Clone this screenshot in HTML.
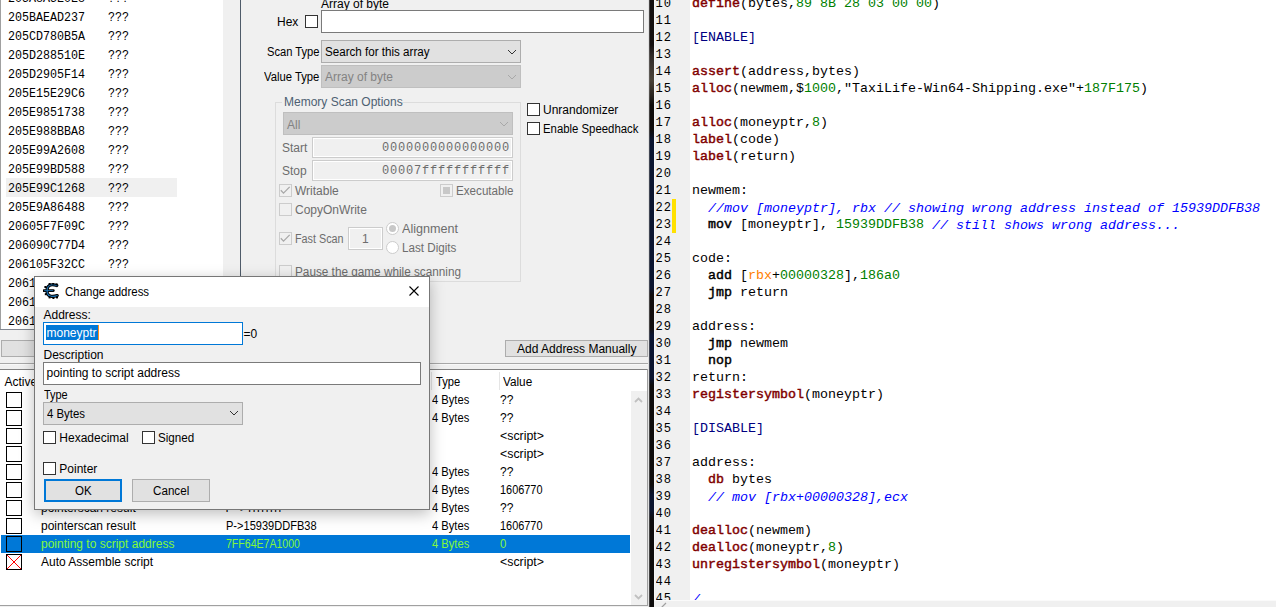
<!DOCTYPE html><html><head><meta charset="utf-8"><style>
html,body{margin:0;padding:0;}
body{width:1276px;height:607px;overflow:hidden;position:relative;background:#f0f0f0;font-family:"Liberation Sans",sans-serif;}
div{box-sizing:content-box;}
</style></head><body>
<div style="position:absolute;left:0px;top:0px;width:223px;height:329px;background:#fff"></div>
<div style="position:absolute;left:0px;top:0px;width:1px;height:330px;background:#a0a0a0"></div>
<div style="position:absolute;left:0px;top:329px;width:223px;height:1px;background:#828790"></div>
<div style="position:absolute;left:6px;top:178px;width:171px;height:19px;background:#f0f0f0"></div>
<div style="position:absolute;left:8px;top:-7.70px;line-height:15px;font-size:12px;font-family:'Liberation Mono', monospace;color:#000;white-space:pre;transform:scaleX(0.972);transform-origin:0 0;">205A8A5E0E8</div>
<div style="position:absolute;left:107.5px;top:-7.70px;line-height:15px;font-size:12px;font-family:'Liberation Mono', monospace;color:#000;white-space:pre;transform:scaleX(0.972);transform-origin:0 0;">???</div>
<div style="position:absolute;left:8px;top:11.30px;line-height:15px;font-size:12px;font-family:'Liberation Mono', monospace;color:#000;white-space:pre;transform:scaleX(0.972);transform-origin:0 0;">205BAEAD237</div>
<div style="position:absolute;left:107.5px;top:11.30px;line-height:15px;font-size:12px;font-family:'Liberation Mono', monospace;color:#000;white-space:pre;transform:scaleX(0.972);transform-origin:0 0;">???</div>
<div style="position:absolute;left:8px;top:30.30px;line-height:15px;font-size:12px;font-family:'Liberation Mono', monospace;color:#000;white-space:pre;transform:scaleX(0.972);transform-origin:0 0;">205CD780B5A</div>
<div style="position:absolute;left:107.5px;top:30.30px;line-height:15px;font-size:12px;font-family:'Liberation Mono', monospace;color:#000;white-space:pre;transform:scaleX(0.972);transform-origin:0 0;">???</div>
<div style="position:absolute;left:8px;top:49.30px;line-height:15px;font-size:12px;font-family:'Liberation Mono', monospace;color:#000;white-space:pre;transform:scaleX(0.972);transform-origin:0 0;">205D288510E</div>
<div style="position:absolute;left:107.5px;top:49.30px;line-height:15px;font-size:12px;font-family:'Liberation Mono', monospace;color:#000;white-space:pre;transform:scaleX(0.972);transform-origin:0 0;">???</div>
<div style="position:absolute;left:8px;top:68.31px;line-height:15px;font-size:12px;font-family:'Liberation Mono', monospace;color:#000;white-space:pre;transform:scaleX(0.972);transform-origin:0 0;">205D2905F14</div>
<div style="position:absolute;left:107.5px;top:68.31px;line-height:15px;font-size:12px;font-family:'Liberation Mono', monospace;color:#000;white-space:pre;transform:scaleX(0.972);transform-origin:0 0;">???</div>
<div style="position:absolute;left:8px;top:87.31px;line-height:15px;font-size:12px;font-family:'Liberation Mono', monospace;color:#000;white-space:pre;transform:scaleX(0.972);transform-origin:0 0;">205E15E29C6</div>
<div style="position:absolute;left:107.5px;top:87.31px;line-height:15px;font-size:12px;font-family:'Liberation Mono', monospace;color:#000;white-space:pre;transform:scaleX(0.972);transform-origin:0 0;">???</div>
<div style="position:absolute;left:8px;top:106.31px;line-height:15px;font-size:12px;font-family:'Liberation Mono', monospace;color:#000;white-space:pre;transform:scaleX(0.972);transform-origin:0 0;">205E9851738</div>
<div style="position:absolute;left:107.5px;top:106.31px;line-height:15px;font-size:12px;font-family:'Liberation Mono', monospace;color:#000;white-space:pre;transform:scaleX(0.972);transform-origin:0 0;">???</div>
<div style="position:absolute;left:8px;top:125.31px;line-height:15px;font-size:12px;font-family:'Liberation Mono', monospace;color:#000;white-space:pre;transform:scaleX(0.972);transform-origin:0 0;">205E988BBA8</div>
<div style="position:absolute;left:107.5px;top:125.31px;line-height:15px;font-size:12px;font-family:'Liberation Mono', monospace;color:#000;white-space:pre;transform:scaleX(0.972);transform-origin:0 0;">???</div>
<div style="position:absolute;left:8px;top:144.31px;line-height:15px;font-size:12px;font-family:'Liberation Mono', monospace;color:#000;white-space:pre;transform:scaleX(0.972);transform-origin:0 0;">205E99A2608</div>
<div style="position:absolute;left:107.5px;top:144.31px;line-height:15px;font-size:12px;font-family:'Liberation Mono', monospace;color:#000;white-space:pre;transform:scaleX(0.972);transform-origin:0 0;">???</div>
<div style="position:absolute;left:8px;top:163.31px;line-height:15px;font-size:12px;font-family:'Liberation Mono', monospace;color:#000;white-space:pre;transform:scaleX(0.972);transform-origin:0 0;">205E99BD588</div>
<div style="position:absolute;left:107.5px;top:163.31px;line-height:15px;font-size:12px;font-family:'Liberation Mono', monospace;color:#000;white-space:pre;transform:scaleX(0.972);transform-origin:0 0;">???</div>
<div style="position:absolute;left:8px;top:182.31px;line-height:15px;font-size:12px;font-family:'Liberation Mono', monospace;color:#000;white-space:pre;transform:scaleX(0.972);transform-origin:0 0;">205E99C1268</div>
<div style="position:absolute;left:107.5px;top:182.31px;line-height:15px;font-size:12px;font-family:'Liberation Mono', monospace;color:#000;white-space:pre;transform:scaleX(0.972);transform-origin:0 0;">???</div>
<div style="position:absolute;left:8px;top:201.31px;line-height:15px;font-size:12px;font-family:'Liberation Mono', monospace;color:#000;white-space:pre;transform:scaleX(0.972);transform-origin:0 0;">205E9A86488</div>
<div style="position:absolute;left:107.5px;top:201.31px;line-height:15px;font-size:12px;font-family:'Liberation Mono', monospace;color:#000;white-space:pre;transform:scaleX(0.972);transform-origin:0 0;">???</div>
<div style="position:absolute;left:8px;top:220.31px;line-height:15px;font-size:12px;font-family:'Liberation Mono', monospace;color:#000;white-space:pre;transform:scaleX(0.972);transform-origin:0 0;">20605F7F09C</div>
<div style="position:absolute;left:107.5px;top:220.31px;line-height:15px;font-size:12px;font-family:'Liberation Mono', monospace;color:#000;white-space:pre;transform:scaleX(0.972);transform-origin:0 0;">???</div>
<div style="position:absolute;left:8px;top:239.31px;line-height:15px;font-size:12px;font-family:'Liberation Mono', monospace;color:#000;white-space:pre;transform:scaleX(0.972);transform-origin:0 0;">206090C77D4</div>
<div style="position:absolute;left:107.5px;top:239.31px;line-height:15px;font-size:12px;font-family:'Liberation Mono', monospace;color:#000;white-space:pre;transform:scaleX(0.972);transform-origin:0 0;">???</div>
<div style="position:absolute;left:8px;top:258.31px;line-height:15px;font-size:12px;font-family:'Liberation Mono', monospace;color:#000;white-space:pre;transform:scaleX(0.972);transform-origin:0 0;">206105F32CC</div>
<div style="position:absolute;left:107.5px;top:258.31px;line-height:15px;font-size:12px;font-family:'Liberation Mono', monospace;color:#000;white-space:pre;transform:scaleX(0.972);transform-origin:0 0;">???</div>
<div style="position:absolute;left:8px;top:277.31px;line-height:15px;font-size:12px;font-family:'Liberation Mono', monospace;color:#000;white-space:pre;transform:scaleX(0.972);transform-origin:0 0;">206105F4A10</div>
<div style="position:absolute;left:107.5px;top:277.31px;line-height:15px;font-size:12px;font-family:'Liberation Mono', monospace;color:#000;white-space:pre;transform:scaleX(0.972);transform-origin:0 0;">???</div>
<div style="position:absolute;left:8px;top:296.31px;line-height:15px;font-size:12px;font-family:'Liberation Mono', monospace;color:#000;white-space:pre;transform:scaleX(0.972);transform-origin:0 0;">206107A0F00</div>
<div style="position:absolute;left:107.5px;top:296.31px;line-height:15px;font-size:12px;font-family:'Liberation Mono', monospace;color:#000;white-space:pre;transform:scaleX(0.972);transform-origin:0 0;">???</div>
<div style="position:absolute;left:8px;top:315.31px;line-height:15px;font-size:12px;font-family:'Liberation Mono', monospace;color:#000;white-space:pre;transform:scaleX(0.972);transform-origin:0 0;">20610A3D1C8</div>
<div style="position:absolute;left:107.5px;top:315.31px;line-height:15px;font-size:12px;font-family:'Liberation Mono', monospace;color:#000;white-space:pre;transform:scaleX(0.972);transform-origin:0 0;">???</div>
<div style="position:absolute;left:240px;top:0px;width:1px;height:330px;background:#4f5b69"></div>
<div style="position:absolute;left:321px;top:-3.16px;line-height:14px;font-size:12px;font-family:'Liberation Sans', sans-serif;color:#000;white-space:pre;">Array of byte</div>
<div style="position:absolute;left:277px;top:14.84px;line-height:14px;font-size:12px;font-family:'Liberation Sans', sans-serif;color:#000;white-space:pre;">Hex</div>
<div style="position:absolute;left:305px;top:15px;width:11px;height:11px;border:1px solid #333;background:#fff"></div>
<div style="position:absolute;left:321px;top:10px;width:321px;height:21px;background:#fff;border:1px solid #7a7a7a"></div>
<div style="position:absolute;left:267px;top:44.84px;line-height:14px;font-size:12px;font-family:'Liberation Sans', sans-serif;color:#000;white-space:pre;transform:scaleX(0.93);transform-origin:0 0;">Scan Type</div>
<div style="position:absolute;left:321px;top:40px;width:198px;height:21px;background:#e1e1e1;border:1px solid #adadad"></div>
<div style="position:absolute;left:325px;top:44.84px;line-height:14px;font-size:12px;font-family:'Liberation Sans', sans-serif;color:#000;white-space:pre;transform:scaleX(0.968);transform-origin:0 0;">Search for this array</div>
<svg style="position:absolute;left:507.0px;top:49.0px" width="10" height="6.0"><path d="M1 1 L5.0 5.0 L9 1" fill="none" stroke="#333" stroke-width="1"/></svg>
<div style="position:absolute;left:264px;top:69.84px;line-height:14px;font-size:12px;font-family:'Liberation Sans', sans-serif;color:#000;white-space:pre;transform:scaleX(0.94);transform-origin:0 0;">Value Type</div>
<div style="position:absolute;left:321px;top:65px;width:198px;height:21px;background:#cccccc;border:1px solid #bfbfbf"></div>
<div style="position:absolute;left:325px;top:69.84px;line-height:14px;font-size:12px;font-family:'Liberation Sans', sans-serif;color:#838383;white-space:pre;">Array of byte</div>
<svg style="position:absolute;left:507.0px;top:74.0px" width="10" height="6.0"><path d="M1 1 L5.0 5.0 L9 1" fill="none" stroke="#a8a8a8" stroke-width="1"/></svg>
<div style="position:absolute;left:275px;top:102px;width:244px;height:178px;border:1px solid #dcdcdc"></div>
<div style="position:absolute;left:282px;top:95px;width:120px;height:12px;background:#f0f0f0"></div>
<div style="position:absolute;left:284px;top:94.84px;line-height:14px;font-size:12px;font-family:'Liberation Sans', sans-serif;color:#4d6072;white-space:pre;">Memory Scan Options</div>
<div style="position:absolute;left:283px;top:112px;width:228px;height:21px;background:#cccccc;border:1px solid #bfbfbf"></div>
<div style="position:absolute;left:287px;top:117.84px;line-height:14px;font-size:12px;font-family:'Liberation Sans', sans-serif;color:#838383;white-space:pre;">All</div>
<svg style="position:absolute;left:499.0px;top:121.0px" width="10" height="6.0"><path d="M1 1 L5.0 5.0 L9 1" fill="none" stroke="#a8a8a8" stroke-width="1"/></svg>
<div style="position:absolute;left:282px;top:140.84px;line-height:14px;font-size:12px;font-family:'Liberation Sans', sans-serif;color:#6d6d6d;white-space:pre;">Start</div>
<div style="position:absolute;left:312px;top:137px;width:199px;height:19px;background:#f0f0f0;border:1px solid #cccccc;box-shadow:inset 0 0 0 1px #fff"></div>
<div style="position:absolute;left:382px;top:141.31px;line-height:15px;font-size:12px;font-family:'Liberation Mono', monospace;color:#6d6d6d;white-space:pre;letter-spacing:0.8px">0000000000000000</div>
<div style="position:absolute;left:282px;top:163.84px;line-height:14px;font-size:12px;font-family:'Liberation Sans', sans-serif;color:#6d6d6d;white-space:pre;">Stop</div>
<div style="position:absolute;left:312px;top:160px;width:199px;height:19px;background:#f0f0f0;border:1px solid #cccccc;box-shadow:inset 0 0 0 1px #fff"></div>
<div style="position:absolute;left:382px;top:164.31px;line-height:15px;font-size:12px;font-family:'Liberation Mono', monospace;color:#6d6d6d;white-space:pre;letter-spacing:0.8px">00007fffffffffff</div>
<div style="position:absolute;left:279px;top:184px;width:11px;height:11px;border:1px solid #cccccc;background:#f0f0f0"></div>
<svg style="position:absolute;left:279px;top:184px" width="13" height="13"><path d="M1.8 6.3 L4.5 9.1 L10.7 2.9" fill="none" stroke="#a8a8a8" stroke-width="1.3"/></svg>
<div style="position:absolute;left:295px;top:183.84px;line-height:14px;font-size:12px;font-family:'Liberation Sans', sans-serif;color:#6d6d6d;white-space:pre;">Writable</div>
<div style="position:absolute;left:440px;top:184px;width:11px;height:11px;border:1px solid #cccccc;background:#f0f0f0"></div>
<div style="position:absolute;left:443px;top:187px;width:7px;height:7px;background:#c8c8c8"></div>
<div style="position:absolute;left:456px;top:183.84px;line-height:14px;font-size:12px;font-family:'Liberation Sans', sans-serif;color:#6d6d6d;white-space:pre;transform:scaleX(0.97);transform-origin:0 0;">Executable</div>
<div style="position:absolute;left:279px;top:203px;width:11px;height:11px;border:1px solid #cccccc;background:#f0f0f0"></div>
<div style="position:absolute;left:295px;top:202.84px;line-height:14px;font-size:12px;font-family:'Liberation Sans', sans-serif;color:#6d6d6d;white-space:pre;">CopyOnWrite</div>
<div style="position:absolute;left:279px;top:232px;width:11px;height:11px;border:1px solid #cccccc;background:#f0f0f0"></div>
<svg style="position:absolute;left:279px;top:232px" width="13" height="13"><path d="M1.8 6.3 L4.5 9.1 L10.7 2.9" fill="none" stroke="#a8a8a8" stroke-width="1.3"/></svg>
<div style="position:absolute;left:295px;top:231.84px;line-height:14px;font-size:12px;font-family:'Liberation Sans', sans-serif;color:#6d6d6d;white-space:pre;transform:scaleX(0.9);transform-origin:0 0;">Fast Scan</div>
<div style="position:absolute;left:348px;top:227px;width:33px;height:21px;background:#f0f0f0;border:1px solid #cccccc;box-shadow:inset 0 0 0 1px #fff"></div>
<div style="position:absolute;left:362px;top:231.84px;line-height:14px;font-size:12px;font-family:'Liberation Sans', sans-serif;color:#6d6d6d;white-space:pre;">1</div>
<div style="position:absolute;left:386px;top:222px;width:11px;height:11px;border:1px solid #cccccc;border-radius:50%;background:#fff"></div>
<div style="position:absolute;left:389px;top:225px;width:7px;height:7px;border-radius:50%;background:#c8c8c8"></div>
<div style="position:absolute;left:402px;top:221.84px;line-height:14px;font-size:12px;font-family:'Liberation Sans', sans-serif;color:#6d6d6d;white-space:pre;transform:scaleX(1.05);transform-origin:0 0;">Alignment</div>
<div style="position:absolute;left:386px;top:241px;width:11px;height:11px;border:1px solid #cccccc;border-radius:50%;background:#fff"></div>
<div style="position:absolute;left:402px;top:240.84px;line-height:14px;font-size:12px;font-family:'Liberation Sans', sans-serif;color:#6d6d6d;white-space:pre;transform:scaleX(0.97);transform-origin:0 0;">Last Digits</div>
<div style="position:absolute;left:279px;top:265px;width:11px;height:11px;border:1px solid #cccccc;background:#f0f0f0"></div>
<div style="position:absolute;left:295px;top:264.84px;line-height:14px;font-size:12px;font-family:'Liberation Sans', sans-serif;color:#6d6d6d;white-space:pre;transform:scaleX(0.98);transform-origin:0 0;">Pause the game while scanning</div>
<div style="position:absolute;left:527px;top:103px;width:11px;height:11px;border:1px solid #333;background:#fff"></div>
<div style="position:absolute;left:543px;top:103.34px;line-height:14px;font-size:12px;font-family:'Liberation Sans', sans-serif;color:#000;white-space:pre;">Unrandomizer</div>
<div style="position:absolute;left:527px;top:122px;width:11px;height:11px;border:1px solid #333;background:#fff"></div>
<div style="position:absolute;left:543px;top:122.34px;line-height:14px;font-size:12px;font-family:'Liberation Sans', sans-serif;color:#000;white-space:pre;transform:scaleX(0.947);transform-origin:0 0;">Enable Speedhack</div>
<div style="position:absolute;left:505px;top:340px;width:141px;height:15px;background:#e1e1e1;border:1px solid #adadad"></div>
<div style="position:absolute;left:517px;top:342.14px;line-height:14px;font-size:12px;font-family:'Liberation Sans', sans-serif;color:#000;white-space:pre;">Add Address Manually</div>
<div style="position:absolute;left:1px;top:340px;width:200px;height:15px;background:#e1e1e1;border:1px solid #adadad"></div>
<div style="position:absolute;left:0px;top:363px;width:648px;height:1px;background:#a8a8a8"></div>
<div style="position:absolute;left:0px;top:364px;width:648px;height:1px;background:#f8f8f8"></div>
<div style="position:absolute;left:0px;top:369px;width:648px;height:237px;background:#fff"></div>
<div style="position:absolute;left:0px;top:369px;width:648px;height:1px;background:#828282"></div>
<div style="position:absolute;left:647px;top:369px;width:1px;height:237px;background:#a0a0a0"></div>
<div style="position:absolute;left:0px;top:605px;width:648px;height:1px;background:#a0a0a0"></div>
<div style="position:absolute;left:4.5px;top:374.64px;line-height:14px;font-size:12px;font-family:'Liberation Sans', sans-serif;color:#000;white-space:pre;">Active</div>
<div style="position:absolute;left:431px;top:372px;width:1px;height:18px;background:#e5e5e5"></div>
<div style="position:absolute;left:436px;top:374.64px;line-height:14px;font-size:12px;font-family:'Liberation Sans', sans-serif;color:#000;white-space:pre;transform:scaleX(0.93);transform-origin:0 0;">Type</div>
<div style="position:absolute;left:499px;top:372px;width:1px;height:18px;background:#e5e5e5"></div>
<div style="position:absolute;left:503px;top:374.64px;line-height:14px;font-size:12px;font-family:'Liberation Sans', sans-serif;color:#000;white-space:pre;transform:scaleX(0.98);transform-origin:0 0;">Value</div>
<div style="position:absolute;left:6px;top:392px;width:14px;height:14px;border:1px solid #000;background:#fff"></div>
<div style="position:absolute;left:432px;top:392.74px;line-height:14px;font-size:12px;font-family:'Liberation Sans', sans-serif;color:#000;white-space:pre;transform:scaleX(0.93);transform-origin:0 0;">4 Bytes</div>
<div style="position:absolute;left:500px;top:392.74px;line-height:14px;font-size:12px;font-family:'Liberation Sans', sans-serif;color:#000;white-space:pre;">??</div>
<div style="position:absolute;left:6px;top:410px;width:14px;height:14px;border:1px solid #000;background:#fff"></div>
<div style="position:absolute;left:432px;top:410.74px;line-height:14px;font-size:12px;font-family:'Liberation Sans', sans-serif;color:#000;white-space:pre;transform:scaleX(0.93);transform-origin:0 0;">4 Bytes</div>
<div style="position:absolute;left:500px;top:410.74px;line-height:14px;font-size:12px;font-family:'Liberation Sans', sans-serif;color:#000;white-space:pre;">??</div>
<div style="position:absolute;left:6px;top:428px;width:14px;height:14px;border:1px solid #000;background:#fff"></div>
<div style="position:absolute;left:500px;top:428.74px;line-height:14px;font-size:12px;font-family:'Liberation Sans', sans-serif;color:#000;white-space:pre;transform:scaleX(1.03);transform-origin:0 0;">&lt;script&gt;</div>
<div style="position:absolute;left:6px;top:446px;width:14px;height:14px;border:1px solid #000;background:#fff"></div>
<div style="position:absolute;left:500px;top:446.74px;line-height:14px;font-size:12px;font-family:'Liberation Sans', sans-serif;color:#000;white-space:pre;transform:scaleX(1.03);transform-origin:0 0;">&lt;script&gt;</div>
<div style="position:absolute;left:6px;top:464px;width:14px;height:14px;border:1px solid #000;background:#fff"></div>
<div style="position:absolute;left:432px;top:464.74px;line-height:14px;font-size:12px;font-family:'Liberation Sans', sans-serif;color:#000;white-space:pre;transform:scaleX(0.93);transform-origin:0 0;">4 Bytes</div>
<div style="position:absolute;left:500px;top:464.74px;line-height:14px;font-size:12px;font-family:'Liberation Sans', sans-serif;color:#000;white-space:pre;">??</div>
<div style="position:absolute;left:6px;top:482px;width:14px;height:14px;border:1px solid #000;background:#fff"></div>
<div style="position:absolute;left:432px;top:482.74px;line-height:14px;font-size:12px;font-family:'Liberation Sans', sans-serif;color:#000;white-space:pre;transform:scaleX(0.93);transform-origin:0 0;">4 Bytes</div>
<div style="position:absolute;left:500px;top:482.74px;line-height:14px;font-size:12px;font-family:'Liberation Sans', sans-serif;color:#000;white-space:pre;transform:scaleX(0.91);transform-origin:0 0;">1606770</div>
<div style="position:absolute;left:6px;top:500px;width:14px;height:14px;border:1px solid #000;background:#fff"></div>
<div style="position:absolute;left:41px;top:500.74px;line-height:14px;font-size:12px;font-family:'Liberation Sans', sans-serif;color:#000;white-space:pre;">pointerscan result</div>
<div style="position:absolute;left:225.5px;top:500.74px;line-height:14px;font-size:12px;font-family:'Liberation Sans', sans-serif;color:#000;white-space:pre;letter-spacing:1.2px">P-&gt;ffffffff</div>
<div style="position:absolute;left:432px;top:500.74px;line-height:14px;font-size:12px;font-family:'Liberation Sans', sans-serif;color:#000;white-space:pre;transform:scaleX(0.93);transform-origin:0 0;">4 Bytes</div>
<div style="position:absolute;left:500px;top:500.74px;line-height:14px;font-size:12px;font-family:'Liberation Sans', sans-serif;color:#000;white-space:pre;">??</div>
<div style="position:absolute;left:6px;top:518px;width:14px;height:14px;border:1px solid #000;background:#fff"></div>
<div style="position:absolute;left:41px;top:518.74px;line-height:14px;font-size:12px;font-family:'Liberation Sans', sans-serif;color:#000;white-space:pre;">pointerscan result</div>
<div style="position:absolute;left:225.5px;top:518.74px;line-height:14px;font-size:12px;font-family:'Liberation Sans', sans-serif;color:#000;white-space:pre;transform:scaleX(0.92);transform-origin:0 0;">P-&gt;15939DDFB38</div>
<div style="position:absolute;left:432px;top:518.74px;line-height:14px;font-size:12px;font-family:'Liberation Sans', sans-serif;color:#000;white-space:pre;transform:scaleX(0.93);transform-origin:0 0;">4 Bytes</div>
<div style="position:absolute;left:500px;top:518.74px;line-height:14px;font-size:12px;font-family:'Liberation Sans', sans-serif;color:#000;white-space:pre;transform:scaleX(0.91);transform-origin:0 0;">1606770</div>
<div style="position:absolute;left:1px;top:535px;width:629px;height:18px;background:#0078d7"></div>
<div style="position:absolute;left:6px;top:536px;width:14px;height:14px;border:1px solid #000;background:#0078d7"></div>
<div style="position:absolute;left:41px;top:536.74px;line-height:14px;font-size:12px;font-family:'Liberation Sans', sans-serif;color:#84f83a;white-space:pre;">pointing to script address</div>
<div style="position:absolute;left:225.5px;top:536.74px;line-height:14px;font-size:12px;font-family:'Liberation Sans', sans-serif;color:#84f83a;white-space:pre;transform:scaleX(0.88);transform-origin:0 0;">7FF64E7A1000</div>
<div style="position:absolute;left:432px;top:536.74px;line-height:14px;font-size:12px;font-family:'Liberation Sans', sans-serif;color:#84f83a;white-space:pre;transform:scaleX(0.93);transform-origin:0 0;">4 Bytes</div>
<div style="position:absolute;left:500px;top:536.74px;line-height:14px;font-size:12px;font-family:'Liberation Sans', sans-serif;color:#84f83a;white-space:pre;transform:scaleX(0.95);transform-origin:0 0;">0</div>
<div style="position:absolute;left:6px;top:554px;width:14px;height:14px;border:1px solid #000;background:#fff"></div>
<svg style="position:absolute;left:6px;top:554px" width="16" height="16"><path d="M1 1 L15 15 M15 1 L1 15" stroke="#ff0000" stroke-width="1"/></svg>
<div style="position:absolute;left:41px;top:554.74px;line-height:14px;font-size:12px;font-family:'Liberation Sans', sans-serif;color:#000;white-space:pre;">Auto Assemble script</div>
<div style="position:absolute;left:500px;top:554.74px;line-height:14px;font-size:12px;font-family:'Liberation Sans', sans-serif;color:#000;white-space:pre;transform:scaleX(1.03);transform-origin:0 0;">&lt;script&gt;</div>
<div style="position:absolute;left:631px;top:391px;width:16px;height:214px;background:#f0f0f0"></div>
<svg style="position:absolute;left:633px;top:395px" width="12" height="10"><path d="M2 7 L5.5 3.5 L9 7" fill="none" stroke="#c0c0c0" stroke-width="1.8"/></svg>
<svg style="position:absolute;left:633px;top:592px" width="12" height="10"><path d="M2 3 L5.5 6.5 L9 3" fill="none" stroke="#c0c0c0" stroke-width="1.8"/></svg>
<div style="position:absolute;left:648px;top:0px;width:1px;height:607px;background:#e0e0e0"></div>
<div style="position:absolute;left:649px;top:0px;width:5px;height:607px;background:linear-gradient(to bottom,#151010 0px,#151010 45px,#302a28 55px,#4a4238 80px,#2a2520 95px,#100c0c 105px,#100c0c 130px,#0b1530 140px,#0b1530 288px,#120e0e 295px,#120e0e 328px,#0b1530 335px,#0b1530 378px,#0e0c0c 385px,#0e0c0c 485px,#0b1530 495px,#0b1530 510px,#0e0c0c 520px,#0e0c0c 607px)"></div>
<div style="position:absolute;left:649px;top:0px;width:1px;height:607px;background:rgba(120,120,120,0.5)"></div>
<div style="position:absolute;left:654px;top:0px;width:36px;height:607px;background:#f0f0f0"></div>
<div style="position:absolute;left:690px;top:0px;width:586px;height:600px;background:#fff"></div>
<div style="position:absolute;left:672px;top:199px;width:4px;height:34px;background:#ffe100"></div>
<div style="position:absolute;left:654px;top:0;width:622px;height:600px;overflow:hidden">
<div style="position:absolute;left:1.5px;top:-4.15px;line-height:17px;font-size:12.1px;letter-spacing:0.9px;font-family:'Liberation Mono', monospace;color:#000;white-space:pre">10</div>
<div style="position:absolute;left:38px;top:-4.75px;line-height:17px;font-size:13.333px;font-family:'Liberation Mono', monospace;color:#000;white-space:pre"><span style="color:#800000;-webkit-text-stroke:0.45px #800000">define</span>(bytes,<span style="color:#008000">89 8B 28 03 00 00</span>)</div>
<div style="position:absolute;left:1.5px;top:12.85px;line-height:17px;font-size:12.1px;letter-spacing:0.9px;font-family:'Liberation Mono', monospace;color:#000;white-space:pre">11</div>
<div style="position:absolute;left:1.5px;top:29.85px;line-height:17px;font-size:12.1px;letter-spacing:0.9px;font-family:'Liberation Mono', monospace;color:#000;white-space:pre">12</div>
<div style="position:absolute;left:38px;top:29.25px;line-height:17px;font-size:13.333px;font-family:'Liberation Mono', monospace;color:#000;white-space:pre"><span style="color:#000080">[ENABLE]</span></div>
<div style="position:absolute;left:1.5px;top:46.85px;line-height:17px;font-size:12.1px;letter-spacing:0.9px;font-family:'Liberation Mono', monospace;color:#000;white-space:pre">13</div>
<div style="position:absolute;left:1.5px;top:63.85px;line-height:17px;font-size:12.1px;letter-spacing:0.9px;font-family:'Liberation Mono', monospace;color:#000;white-space:pre">14</div>
<div style="position:absolute;left:38px;top:63.25px;line-height:17px;font-size:13.333px;font-family:'Liberation Mono', monospace;color:#000;white-space:pre"><span style="color:#800000;-webkit-text-stroke:0.45px #800000">assert</span>(address,bytes)</div>
<div style="position:absolute;left:1.5px;top:80.85px;line-height:17px;font-size:12.1px;letter-spacing:0.9px;font-family:'Liberation Mono', monospace;color:#000;white-space:pre">15</div>
<div style="position:absolute;left:38px;top:80.25px;line-height:17px;font-size:13.333px;font-family:'Liberation Mono', monospace;color:#000;white-space:pre"><span style="color:#800000;-webkit-text-stroke:0.45px #800000">alloc</span>(newmem,$<span style="color:#008000">1000</span>,"TaxiLife-Win64-Shipping.exe"+<span style="color:#008000">187F175</span>)</div>
<div style="position:absolute;left:1.5px;top:97.85px;line-height:17px;font-size:12.1px;letter-spacing:0.9px;font-family:'Liberation Mono', monospace;color:#000;white-space:pre">16</div>
<div style="position:absolute;left:1.5px;top:114.85px;line-height:17px;font-size:12.1px;letter-spacing:0.9px;font-family:'Liberation Mono', monospace;color:#000;white-space:pre">17</div>
<div style="position:absolute;left:38px;top:114.25px;line-height:17px;font-size:13.333px;font-family:'Liberation Mono', monospace;color:#000;white-space:pre"><span style="color:#800000;-webkit-text-stroke:0.45px #800000">alloc</span>(moneyptr,<span style="color:#008000">8</span>)</div>
<div style="position:absolute;left:1.5px;top:131.85px;line-height:17px;font-size:12.1px;letter-spacing:0.9px;font-family:'Liberation Mono', monospace;color:#000;white-space:pre">18</div>
<div style="position:absolute;left:38px;top:131.25px;line-height:17px;font-size:13.333px;font-family:'Liberation Mono', monospace;color:#000;white-space:pre"><span style="color:#800000;-webkit-text-stroke:0.45px #800000">label</span>(code)</div>
<div style="position:absolute;left:1.5px;top:148.85px;line-height:17px;font-size:12.1px;letter-spacing:0.9px;font-family:'Liberation Mono', monospace;color:#000;white-space:pre">19</div>
<div style="position:absolute;left:38px;top:148.25px;line-height:17px;font-size:13.333px;font-family:'Liberation Mono', monospace;color:#000;white-space:pre"><span style="color:#800000;-webkit-text-stroke:0.45px #800000">label</span>(return)</div>
<div style="position:absolute;left:1.5px;top:165.85px;line-height:17px;font-size:12.1px;letter-spacing:0.9px;font-family:'Liberation Mono', monospace;color:#000;white-space:pre">20</div>
<div style="position:absolute;left:1.5px;top:182.85px;line-height:17px;font-size:12.1px;letter-spacing:0.9px;font-family:'Liberation Mono', monospace;color:#000;white-space:pre">21</div>
<div style="position:absolute;left:38px;top:182.25px;line-height:17px;font-size:13.333px;font-family:'Liberation Mono', monospace;color:#000;white-space:pre">newmem:</div>
<div style="position:absolute;left:1.5px;top:199.85px;line-height:17px;font-size:12.1px;letter-spacing:0.9px;font-family:'Liberation Mono', monospace;color:#000;white-space:pre">22</div>
<div style="position:absolute;left:38px;top:199.25px;line-height:17px;font-size:13.333px;font-family:'Liberation Mono', monospace;color:#000;white-space:pre">  <i style="color:#0000ff;position:relative;top:1px">//mov [moneyptr], rbx // showing wrong address instead of 15939DDFB38</i></div>
<div style="position:absolute;left:1.5px;top:216.85px;line-height:17px;font-size:12.1px;letter-spacing:0.9px;font-family:'Liberation Mono', monospace;color:#000;white-space:pre">23</div>
<div style="position:absolute;left:38px;top:216.25px;line-height:17px;font-size:13.333px;font-family:'Liberation Mono', monospace;color:#000;white-space:pre">  <span style="-webkit-text-stroke:0.45px #000">mov</span> [moneyptr], <span style="color:#008000">15939DDFB38</span> <i style="color:#0000ff;position:relative;top:1px">// still shows wrong address...</i></div>
<div style="position:absolute;left:1.5px;top:233.85px;line-height:17px;font-size:12.1px;letter-spacing:0.9px;font-family:'Liberation Mono', monospace;color:#000;white-space:pre">24</div>
<div style="position:absolute;left:1.5px;top:250.85px;line-height:17px;font-size:12.1px;letter-spacing:0.9px;font-family:'Liberation Mono', monospace;color:#000;white-space:pre">25</div>
<div style="position:absolute;left:38px;top:250.25px;line-height:17px;font-size:13.333px;font-family:'Liberation Mono', monospace;color:#000;white-space:pre">code:</div>
<div style="position:absolute;left:1.5px;top:267.85px;line-height:17px;font-size:12.1px;letter-spacing:0.9px;font-family:'Liberation Mono', monospace;color:#000;white-space:pre">26</div>
<div style="position:absolute;left:38px;top:267.25px;line-height:17px;font-size:13.333px;font-family:'Liberation Mono', monospace;color:#000;white-space:pre">  <span style="-webkit-text-stroke:0.45px #000">add</span> [<span style="color:#ff8000">rbx</span>+<span style="color:#008000">00000328</span>],<span style="color:#008000">186a0</span></div>
<div style="position:absolute;left:1.5px;top:284.85px;line-height:17px;font-size:12.1px;letter-spacing:0.9px;font-family:'Liberation Mono', monospace;color:#000;white-space:pre">27</div>
<div style="position:absolute;left:38px;top:284.25px;line-height:17px;font-size:13.333px;font-family:'Liberation Mono', monospace;color:#000;white-space:pre">  <span style="-webkit-text-stroke:0.45px #000">jmp</span> return</div>
<div style="position:absolute;left:1.5px;top:301.85px;line-height:17px;font-size:12.1px;letter-spacing:0.9px;font-family:'Liberation Mono', monospace;color:#000;white-space:pre">28</div>
<div style="position:absolute;left:1.5px;top:318.85px;line-height:17px;font-size:12.1px;letter-spacing:0.9px;font-family:'Liberation Mono', monospace;color:#000;white-space:pre">29</div>
<div style="position:absolute;left:38px;top:318.25px;line-height:17px;font-size:13.333px;font-family:'Liberation Mono', monospace;color:#000;white-space:pre">address:</div>
<div style="position:absolute;left:1.5px;top:335.85px;line-height:17px;font-size:12.1px;letter-spacing:0.9px;font-family:'Liberation Mono', monospace;color:#000;white-space:pre">30</div>
<div style="position:absolute;left:38px;top:335.25px;line-height:17px;font-size:13.333px;font-family:'Liberation Mono', monospace;color:#000;white-space:pre">  <span style="-webkit-text-stroke:0.45px #000">jmp</span> newmem</div>
<div style="position:absolute;left:1.5px;top:352.85px;line-height:17px;font-size:12.1px;letter-spacing:0.9px;font-family:'Liberation Mono', monospace;color:#000;white-space:pre">31</div>
<div style="position:absolute;left:38px;top:352.25px;line-height:17px;font-size:13.333px;font-family:'Liberation Mono', monospace;color:#000;white-space:pre">  <span style="-webkit-text-stroke:0.45px #000">nop</span></div>
<div style="position:absolute;left:1.5px;top:369.85px;line-height:17px;font-size:12.1px;letter-spacing:0.9px;font-family:'Liberation Mono', monospace;color:#000;white-space:pre">32</div>
<div style="position:absolute;left:38px;top:369.25px;line-height:17px;font-size:13.333px;font-family:'Liberation Mono', monospace;color:#000;white-space:pre">return:</div>
<div style="position:absolute;left:1.5px;top:386.85px;line-height:17px;font-size:12.1px;letter-spacing:0.9px;font-family:'Liberation Mono', monospace;color:#000;white-space:pre">33</div>
<div style="position:absolute;left:38px;top:386.25px;line-height:17px;font-size:13.333px;font-family:'Liberation Mono', monospace;color:#000;white-space:pre"><span style="color:#800000;-webkit-text-stroke:0.45px #800000">registersymbol</span>(moneyptr)</div>
<div style="position:absolute;left:1.5px;top:403.85px;line-height:17px;font-size:12.1px;letter-spacing:0.9px;font-family:'Liberation Mono', monospace;color:#000;white-space:pre">34</div>
<div style="position:absolute;left:1.5px;top:420.85px;line-height:17px;font-size:12.1px;letter-spacing:0.9px;font-family:'Liberation Mono', monospace;color:#000;white-space:pre">35</div>
<div style="position:absolute;left:38px;top:420.25px;line-height:17px;font-size:13.333px;font-family:'Liberation Mono', monospace;color:#000;white-space:pre"><span style="color:#000080">[DISABLE]</span></div>
<div style="position:absolute;left:1.5px;top:437.85px;line-height:17px;font-size:12.1px;letter-spacing:0.9px;font-family:'Liberation Mono', monospace;color:#000;white-space:pre">36</div>
<div style="position:absolute;left:1.5px;top:454.85px;line-height:17px;font-size:12.1px;letter-spacing:0.9px;font-family:'Liberation Mono', monospace;color:#000;white-space:pre">37</div>
<div style="position:absolute;left:38px;top:454.25px;line-height:17px;font-size:13.333px;font-family:'Liberation Mono', monospace;color:#000;white-space:pre">address:</div>
<div style="position:absolute;left:1.5px;top:471.85px;line-height:17px;font-size:12.1px;letter-spacing:0.9px;font-family:'Liberation Mono', monospace;color:#000;white-space:pre">38</div>
<div style="position:absolute;left:38px;top:471.25px;line-height:17px;font-size:13.333px;font-family:'Liberation Mono', monospace;color:#000;white-space:pre">  <span style="color:#800000;-webkit-text-stroke:0.45px #800000">db</span> bytes</div>
<div style="position:absolute;left:1.5px;top:488.85px;line-height:17px;font-size:12.1px;letter-spacing:0.9px;font-family:'Liberation Mono', monospace;color:#000;white-space:pre">39</div>
<div style="position:absolute;left:38px;top:488.25px;line-height:17px;font-size:13.333px;font-family:'Liberation Mono', monospace;color:#000;white-space:pre">  <i style="color:#0000ff;position:relative;top:1px">// mov [rbx+00000328],ecx</i></div>
<div style="position:absolute;left:1.5px;top:505.85px;line-height:17px;font-size:12.1px;letter-spacing:0.9px;font-family:'Liberation Mono', monospace;color:#000;white-space:pre">40</div>
<div style="position:absolute;left:1.5px;top:522.85px;line-height:17px;font-size:12.1px;letter-spacing:0.9px;font-family:'Liberation Mono', monospace;color:#000;white-space:pre">41</div>
<div style="position:absolute;left:38px;top:522.25px;line-height:17px;font-size:13.333px;font-family:'Liberation Mono', monospace;color:#000;white-space:pre"><span style="color:#800000;-webkit-text-stroke:0.45px #800000">dealloc</span>(newmem)</div>
<div style="position:absolute;left:1.5px;top:539.85px;line-height:17px;font-size:12.1px;letter-spacing:0.9px;font-family:'Liberation Mono', monospace;color:#000;white-space:pre">42</div>
<div style="position:absolute;left:38px;top:539.25px;line-height:17px;font-size:13.333px;font-family:'Liberation Mono', monospace;color:#000;white-space:pre"><span style="color:#800000;-webkit-text-stroke:0.45px #800000">dealloc</span>(moneyptr,<span style="color:#008000">8</span>)</div>
<div style="position:absolute;left:1.5px;top:556.85px;line-height:17px;font-size:12.1px;letter-spacing:0.9px;font-family:'Liberation Mono', monospace;color:#000;white-space:pre">43</div>
<div style="position:absolute;left:38px;top:556.25px;line-height:17px;font-size:13.333px;font-family:'Liberation Mono', monospace;color:#000;white-space:pre"><span style="color:#800000;-webkit-text-stroke:0.45px #800000">unregistersymbol</span>(moneyptr)</div>
<div style="position:absolute;left:1.5px;top:573.85px;line-height:17px;font-size:12.1px;letter-spacing:0.9px;font-family:'Liberation Mono', monospace;color:#000;white-space:pre">44</div>
<div style="position:absolute;left:1.5px;top:590.85px;line-height:17px;font-size:12.1px;letter-spacing:0.9px;font-family:'Liberation Mono', monospace;color:#000;white-space:pre">45</div>
<div style="position:absolute;left:38px;top:590.25px;line-height:17px;font-size:13.333px;font-family:'Liberation Mono', monospace;color:#000;white-space:pre"><i style="color:#0000ff;position:relative;top:1px">/</i></div>
</div>
<div style="position:absolute;left:654px;top:600px;width:622px;height:1px;background:#fafafa"></div>
<div style="position:absolute;left:654px;top:601px;width:622px;height:6px;background:#f0f0f0"></div>
<svg style="position:absolute;left:660px;top:602px" width="8" height="8"><path d="M6 1 L2 5 L6 9" fill="none" stroke="#a0a0a0" stroke-width="1.2"/></svg>
<div style="position:absolute;left:654px;top:0px;width:2px;height:600px;background:linear-gradient(to right,#fafafa,#ececec)"></div>
<div style="position:absolute;left:34px;top:276px;width:396px;height:234px;box-shadow:0 4px 14px rgba(0,0,0,0.26)"></div>
<div style="position:absolute;left:34px;top:276px;width:394px;height:232px;background:#f0f0f0;border:1px solid #777777"></div>
<div style="position:absolute;left:35px;top:277px;width:394px;height:30px;background:#fff"></div>
<svg style="position:absolute;left:43px;top:283px" width="16" height="16" viewBox="0 0 16 16">
<g fill="none" stroke-linecap="round">
<path d="M13.8 2.6 C9 1 5.2 1.6 4.2 5.5 L4.2 10 C5.4 13.6 9.5 14.2 14.2 12.6" stroke="#000" stroke-width="3.2"/>
<path d="M0.9 7.6 H10.4" stroke="#000" stroke-width="2.6"/>
<path d="M13.8 2.6 C9 1 5.2 1.6 4.2 5.5 L4.2 10 C5.4 13.6 9.5 14.2 14.2 12.6" stroke="#1b6fb0" stroke-width="1.2"/>
<path d="M1.6 7.6 H9.8" stroke="#1b6fb0" stroke-width="0.9"/>
</g>
<g fill="#000">
<rect x="5.6" y="0" width="2" height="2"/><rect x="9.2" y="-0.4" width="2" height="2"/><rect x="12.6" y="0.4" width="2" height="2"/>
<rect x="1.4" y="3" width="2" height="2"/><rect x="1.8" y="10.2" width="2" height="2"/>
<rect x="5.6" y="13.4" width="2" height="2"/><rect x="9.4" y="14.2" width="2" height="2"/><rect x="13" y="13.4" width="2" height="2"/>
</g>
</svg>
<div style="position:absolute;left:64.7px;top:285.34px;line-height:14px;font-size:12px;font-family:'Liberation Sans', sans-serif;color:#000;white-space:pre;transform:scaleX(0.955);transform-origin:0 0;">Change address</div>
<svg style="position:absolute;left:408px;top:285px" width="12" height="12"><path d="M1.5 1.5 L10.5 10.5 M10.5 1.5 L1.5 10.5" stroke="#000" stroke-width="1.1"/></svg>
<div style="position:absolute;left:43.5px;top:308.44px;line-height:14px;font-size:12px;font-family:'Liberation Sans', sans-serif;color:#000;white-space:pre;">Address:</div>
<div style="position:absolute;left:43px;top:322px;width:198px;height:21px;background:#fff;border:1px solid #0078d7"></div>
<div style="position:absolute;left:46px;top:325px;width:52px;height:15px;background:#0078d7"></div>
<div style="position:absolute;left:98px;top:325px;width:1px;height:15px;background:#ff8c1a"></div>
<div style="position:absolute;left:46.5px;top:325.84px;line-height:14px;font-size:12px;font-family:'Liberation Sans', sans-serif;color:#fff;white-space:pre;">moneyptr</div>
<div style="position:absolute;left:243.5px;top:326.84px;line-height:14px;font-size:12px;font-family:'Liberation Sans', sans-serif;color:#000;white-space:pre;">=0</div>
<div style="position:absolute;left:43.5px;top:348.34px;line-height:14px;font-size:12px;font-family:'Liberation Sans', sans-serif;color:#000;white-space:pre;">Description</div>
<div style="position:absolute;left:43px;top:362px;width:376px;height:21px;background:#fff;border:1px solid #7a7a7a"></div>
<div style="position:absolute;left:46.5px;top:366.34px;line-height:14px;font-size:12px;font-family:'Liberation Sans', sans-serif;color:#000;white-space:pre;">pointing to script address</div>
<div style="position:absolute;left:44px;top:388.44px;line-height:14px;font-size:12px;font-family:'Liberation Sans', sans-serif;color:#000;white-space:pre;transform:scaleX(0.91);transform-origin:0 0;">Type</div>
<div style="position:absolute;left:43px;top:402px;width:198px;height:21px;background:#e1e1e1;border:1px solid #adadad"></div>
<div style="position:absolute;left:46.6px;top:407.34px;line-height:14px;font-size:12px;font-family:'Liberation Sans', sans-serif;color:#000;white-space:pre;transform:scaleX(0.95);transform-origin:0 0;">4 Bytes</div>
<svg style="position:absolute;left:229.0px;top:410.0px" width="10" height="6.0"><path d="M1 1 L5.0 5.0 L9 1" fill="none" stroke="#333" stroke-width="1"/></svg>
<div style="position:absolute;left:43px;top:431px;width:11px;height:11px;border:1px solid #333;background:#fff"></div>
<div style="position:absolute;left:59.3px;top:431.34px;line-height:14px;font-size:12px;font-family:'Liberation Sans', sans-serif;color:#000;white-space:pre;">Hexadecimal</div>
<div style="position:absolute;left:142px;top:431px;width:11px;height:11px;border:1px solid #333;background:#fff"></div>
<div style="position:absolute;left:158px;top:431.34px;line-height:14px;font-size:12px;font-family:'Liberation Sans', sans-serif;color:#000;white-space:pre;transform:scaleX(0.97);transform-origin:0 0;">Signed</div>
<div style="position:absolute;left:43px;top:462px;width:11px;height:11px;border:1px solid #333;background:#fff"></div>
<div style="position:absolute;left:59.3px;top:462.34px;line-height:14px;font-size:12px;font-family:'Liberation Sans', sans-serif;color:#000;white-space:pre;">Pointer</div>
<div style="position:absolute;left:44px;top:479px;width:74px;height:19px;background:#e1e1e1;border:2px solid #0078d7"></div>
<div style="position:absolute;left:75px;top:484.34px;line-height:14px;font-size:12px;font-family:'Liberation Sans', sans-serif;color:#000;white-space:pre;transform:scaleX(0.96);transform-origin:0 0;">OK</div>
<div style="position:absolute;left:132px;top:479px;width:76px;height:21px;background:#e1e1e1;border:1px solid #adadad"></div>
<div style="position:absolute;left:153px;top:484.34px;line-height:14px;font-size:12px;font-family:'Liberation Sans', sans-serif;color:#000;white-space:pre;transform:scaleX(0.97);transform-origin:0 0;">Cancel</div>
</body></html>
